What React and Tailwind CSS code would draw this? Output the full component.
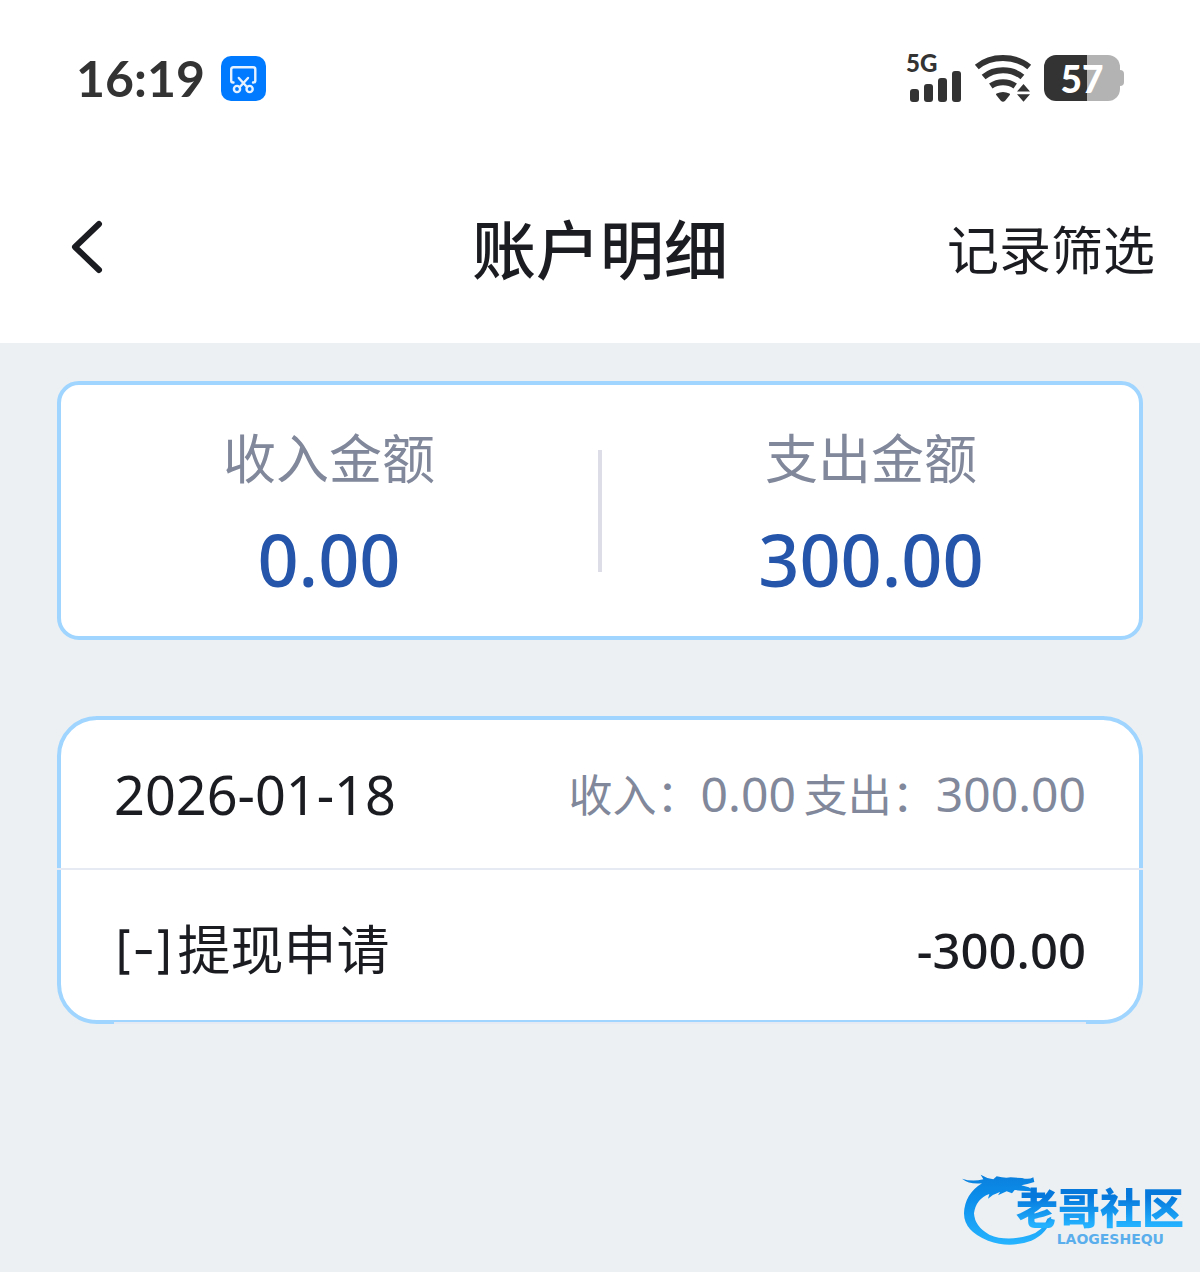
const income = '0.00';
const expense = '300.00';

const records = [
  {
    date: '2026-01-18',
    income: '0.00',
    expense: '300.00',
    items: [{ id: 1, tag: '[-]', title: '提现申请', amount: '-300.00' }],
  },
];

function ScreenshotIcon() {
  return (
    <svg className="size-[45px]" viewBox="0 0 45 45" fill="none" aria-hidden="true">
      <rect width="45" height="45" rx="10" fill="#007bff" />
      <g stroke="#e6f2ff" strokeWidth="2.4" strokeLinecap="round" strokeLinejoin="round">
        <path d="M12.5 26.5 H12 Q10.2 26.5 10.2 24.5 V13.5 Q10.2 11.2 12.5 11.2 H32 Q34.3 11.2 34.3 13.5 V24.5 Q34.3 26.5 32.5 26.5 H32" />
        <path d="M17.8 22 L26.2 31.2 M27 22 L18.6 31.2" />
        <circle cx="16" cy="33" r="3.1" />
        <circle cx="28.6" cy="33" r="3.1" />
      </g>
    </svg>
  );
}

function SignalIcon() {
  return (
    <svg className="h-[31px] w-[52px]" viewBox="0 0 52 31" fill="#333" aria-hidden="true">
      <rect x="0" y="18" width="9" height="13" rx="3" />
      <rect x="14" y="13" width="9" height="18" rx="3" />
      <rect x="28" y="7" width="9" height="24" rx="3" />
      <rect x="42" y="0" width="9" height="31" rx="3" />
    </svg>
  );
}

function WifiIcon() {
  return (
    <svg className="h-[47px] w-[58px]" viewBox="0 0 58 47" fill="none" aria-hidden="true">
      <g stroke="#333" strokeWidth="6">
        <path d="M2.8 12 C17 0 41 0 55.2 12" />
        <path d="M9.6 22 C20.5 13 37.5 13 48.4 22" />
        <path d="M16.8 31 C24 26 34 26 41.2 31" />
      </g>
      <path d="M23 39.4 Q29 36.6 35 39.4 L30.4 45 Q29 46.4 27.6 45 Z" fill="#333" stroke="#333" strokeWidth="2" strokeLinejoin="round" />
      <path d="M49.5 29 L56 36.5 H43 Z M49.5 46.8 L43 39.3 H56 Z" fill="#333" />
    </svg>
  );
}

function BatteryIcon({ level }) {
  return (
    <div className="flex items-center">
      <div className="flex h-[46px] w-[76px] items-center justify-center overflow-hidden rounded-xl bg-[linear-gradient(to_right,#333_57%,#b3b3b3_57%)] font-['Lato'] text-[37px] leading-none font-black text-white">
        {level}
      </div>
      <div className="h-4 w-1 rounded-r-sm bg-[#b3b3b3]" />
    </div>
  );
}

function StatusBar() {
  return (
    <div className="flex h-[156px] items-center justify-between px-[76px]">
      <div className="flex items-center gap-4">
        <span className="font-['Lato'] text-[50px] leading-none font-bold text-[#333]">16:19</span>
        <ScreenshotIcon />
      </div>
      <div className="flex items-center gap-3">
        <div className="flex flex-col">
          <span className="-ml-1 font-['Lato'] text-[24px] leading-[16px] font-black text-[#333]">5G</span>
          <SignalIcon />
        </div>
        <WifiIcon />
        <BatteryIcon level={57} />
      </div>
    </div>
  );
}

function Header() {
  return (
    <header className="grid h-[187px] grid-cols-[1fr_auto_1fr] items-center px-[45px]">
      <button type="button" aria-label="返回" className="justify-self-start pl-[25px]">
        <svg className="h-[60px] w-[34px]" viewBox="0 0 34 60" fill="none" aria-hidden="true">
          <path d="M29 4 L5 27 L29 50" stroke="#1b1c22" strokeWidth="6" strokeLinecap="round" strokeLinejoin="round" />
        </svg>
      </button>
      <h1 className="text-[64px] leading-[80px] font-medium">账户明细</h1>
      <button type="button" className="justify-self-end text-[52px] leading-[80px]">记录筛选</button>
    </header>
  );
}

function SummaryItem({ label, value }) {
  return (
    <div className="flex flex-1 flex-col items-center pt-4">
      <span className="text-[53px] leading-[80px] text-[#81889b]">{label}</span>
      <span className="text-[72px] leading-[120px] font-medium text-[#2455ab]">{value}</span>
    </div>
  );
}

function RecordCard({ record }) {
  return (
    <section className="rounded-[40px] border-4 border-[#9fd5ff] bg-white">
      <div className="-mx-1 flex h-[150px] items-center justify-between border-b-2 border-[#e6eaf3] px-[57px]">
        <h2 className="text-[54px] leading-[80px]">{record.date}</h2>
        <p className="flex items-center gap-2 text-[48px] leading-[80px] text-[#81889b]">
          <span><span className="text-[44px]">收入：</span>{record.income}</span>
          <span><span className="text-[44px]">支出：</span>{record.expense}</span>
        </p>
      </div>
      <ul>
        {record.items.map((item) => (
          <li key={item.id} className="mx-[53px] -mb-1 flex h-[154px] items-center justify-between border-b-2 border-[#e6eaf3] pt-2">
            <span className="flex items-center text-[53px] leading-[80px]">
              <span className="pr-1 font-['Inter'] text-[50px]">{item.tag}</span>
              {item.title}
            </span>
            <span className="text-[49px] leading-[80px] font-medium">{item.amount}</span>
          </li>
        ))}
      </ul>
    </section>
  );
}

function Watermark() {
  return (
    <div className="absolute right-4 bottom-6 flex h-[76px] w-[222px] flex-col items-end justify-end">
      <svg className="absolute inset-0 h-[76px] w-[100px]" viewBox="12 12 300 228" aria-hidden="true">
        <defs>
          <linearGradient id="dragon" x1="0" y1="0" x2="0" y2="1">
            <stop offset="0" stopColor="#0b7fdc" />
            <stop offset="0.35" stopColor="#0b8eec" />
            <stop offset="1" stopColor="#27b4ff" />
          </linearGradient>
        </defs>
        <path
          fill="url(#dragon)"
          d="M12 32 Q42 42 76 34 L68 20 Q88 32 106 34 L116 25 Q142 32 158 28 L192 30 Q212 36 226 28 L229 42 L208 48 L190 52 L212 58 Q222 62 220 70 L188 68 L170 66 L162 76 L146 70 L120 82 L126 72 Q106 78 90 92 L94 78 Q54 92 48 136 Q50 176 94 200 Q146 222 214 202 Q256 188 268 152 L280 146 Q272 194 220 218 Q156 242 90 218 Q18 190 18 136 Q20 78 72 46 Q34 50 12 32 Z"
        />
      </svg>
      <span className="relative bg-gradient-to-b from-[#0678dc] from-25% to-[#24b2ff] to-90% bg-clip-text text-[42px] leading-[44px] font-black text-transparent">老哥社区</span>
      <span className="relative pr-5 font-['DejaVu_Sans'] text-[14px] leading-[18px] font-bold text-[#5aaeec]">LAOGESHEQU</span>
    </div>
  );
}

function App() {
  return (
    <div className="relative flex min-h-screen flex-col bg-[#ecf0f3] font-['Noto_Sans','Noto_Sans_CJK_SC',sans-serif] text-[#1b1c22]">
      <div className="bg-white">
        <StatusBar />
        <Header />
      </div>
      <main className="flex flex-col gap-[76px] px-[57px] py-[38px]">
        <section className="flex h-[259px] items-center rounded-[22px] border-4 border-[#9fd5ff] bg-white">
          <SummaryItem label="收入金额" value={income} />
          <div className="mx-px h-[122px] w-1 bg-[#dcdde6]" />
          <SummaryItem label="支出金额" value={expense} />
        </section>
        {records.map((record) => (
          <RecordCard key={record.date} record={record} />
        ))}
      </main>
      <Watermark />
    </div>
  );
}

export default App;
